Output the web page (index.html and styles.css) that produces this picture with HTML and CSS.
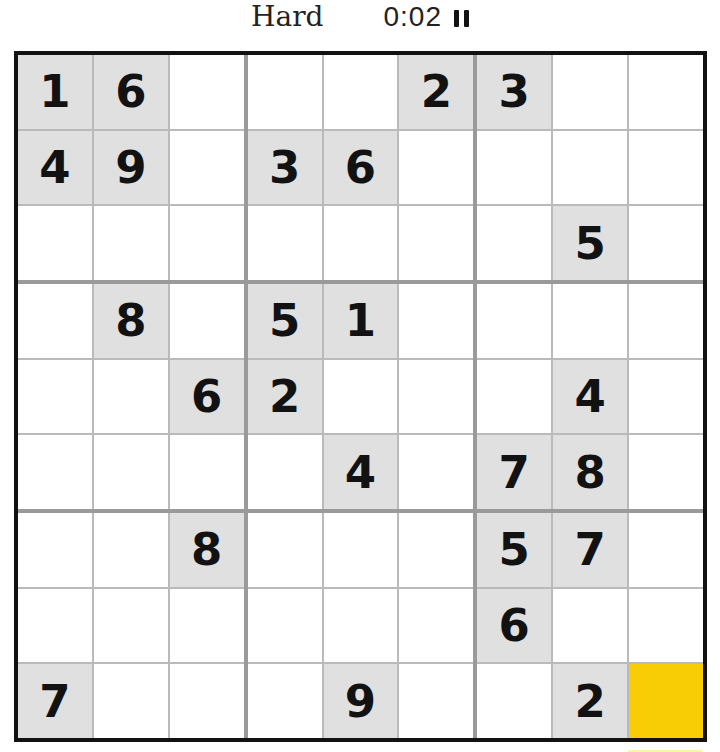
FILE: index.html
```html
<!DOCTYPE html>
<html>
<head>
<meta charset="utf-8">
<link rel="stylesheet" href="styles.css">
</head>
<body>
<div class="header">
  <div class="level">Hard</div>
  <div class="timer"><span class="time">0:02</span><span class="pause"><i></i><i></i></span></div>
</div>
<div class="board">
  <div class="block">
    <div class="cell given">1</div><div class="cell given">6</div><div class="cell"></div>
    <div class="cell given">4</div><div class="cell given">9</div><div class="cell"></div>
    <div class="cell"></div><div class="cell"></div><div class="cell"></div>
  </div>
  <div class="block">
    <div class="cell"></div><div class="cell"></div><div class="cell given">2</div>
    <div class="cell given">3</div><div class="cell given">6</div><div class="cell"></div>
    <div class="cell"></div><div class="cell"></div><div class="cell"></div>
  </div>
  <div class="block">
    <div class="cell given">3</div><div class="cell"></div><div class="cell"></div>
    <div class="cell"></div><div class="cell"></div><div class="cell"></div>
    <div class="cell"></div><div class="cell given">5</div><div class="cell"></div>
  </div>
  <div class="block">
    <div class="cell"></div><div class="cell given">8</div><div class="cell"></div>
    <div class="cell"></div><div class="cell"></div><div class="cell given">6</div>
    <div class="cell"></div><div class="cell"></div><div class="cell"></div>
  </div>
  <div class="block">
    <div class="cell given">5</div><div class="cell given">1</div><div class="cell"></div>
    <div class="cell given">2</div><div class="cell"></div><div class="cell"></div>
    <div class="cell"></div><div class="cell given">4</div><div class="cell"></div>
  </div>
  <div class="block">
    <div class="cell"></div><div class="cell"></div><div class="cell"></div>
    <div class="cell"></div><div class="cell given">4</div><div class="cell"></div>
    <div class="cell given">7</div><div class="cell given">8</div><div class="cell"></div>
  </div>
  <div class="block">
    <div class="cell"></div><div class="cell"></div><div class="cell given">8</div>
    <div class="cell"></div><div class="cell"></div><div class="cell"></div>
    <div class="cell given">7</div><div class="cell"></div><div class="cell"></div>
  </div>
  <div class="block">
    <div class="cell"></div><div class="cell"></div><div class="cell"></div>
    <div class="cell"></div><div class="cell"></div><div class="cell"></div>
    <div class="cell"></div><div class="cell given">9</div><div class="cell"></div>
  </div>
  <div class="block">
    <div class="cell given">5</div><div class="cell given">7</div><div class="cell"></div>
    <div class="cell given">6</div><div class="cell"></div><div class="cell"></div>
    <div class="cell"></div><div class="cell given">2</div><div class="cell selected"></div>
  </div>
</div>
<div class="below"><div class="peek"></div></div>
</body>
</html>
```
FILE: styles.css
```css
html, body {
  margin: 0;
  padding: 0;
  background: #ffffff;
}
body {
  width: 720px;
  height: 752px;
  overflow: hidden;
}
.header {
  height: 51px;
  display: flex;
  justify-content: center;
  align-items: flex-start;
  gap: 60px;
  box-sizing: border-box;
  color: #121212;
}
.level {
  font-family: "DejaVu Serif", serif;
  font-size: 28px;
  line-height: 34px;
  color: #222;
}
.timer {
  display: flex;
  align-items: center;
  gap: 12px;
  height: 34px;
}
.time {
  font-family: "Liberation Sans", Arial, sans-serif;
  font-size: 28px;
  letter-spacing: 1px;
  line-height: 34px;
  color: #222;
}
.pause {
  display: flex;
  gap: 5px;
  height: 17px;
  margin-top: 2px;
}
.pause i {
  display: block;
  width: 5px;
  height: 17px;
  background: #121212;
  border-radius: 1px;
}
.board {
  margin-left: 14px;
  width: 693px;
  height: 691px;
  box-sizing: border-box;
  border: 4px solid #121212;
  background: #9a9a9a;
  display: grid;
  grid-template-columns: 1fr 1fr 1fr;
  grid-template-rows: 1fr 1fr 1fr;
  gap: 4px;
}
.block {
  display: grid;
  grid-template-columns: 1fr 1fr 1fr;
  grid-template-rows: 1fr 1fr 1fr;
  gap: 2px;
  background: #bababa;
}
.cell {
  background: #ffffff;
  display: flex;
  align-items: center;
  justify-content: center;
  font-family: "DejaVu Sans", "Liberation Sans", Arial, sans-serif;
  font-weight: 700;
  font-size: 45px;
  color: #121212;
}
.cell.given {
  background: #e0e0e0;
}
.cell.selected {
  background: #f8cd05;
}
.below {
  margin-top: 8px;
  padding-left: 628px;
}
.peek {
  width: 74px;
  height: 4px;
  background: #fbf5a8;
}
```
